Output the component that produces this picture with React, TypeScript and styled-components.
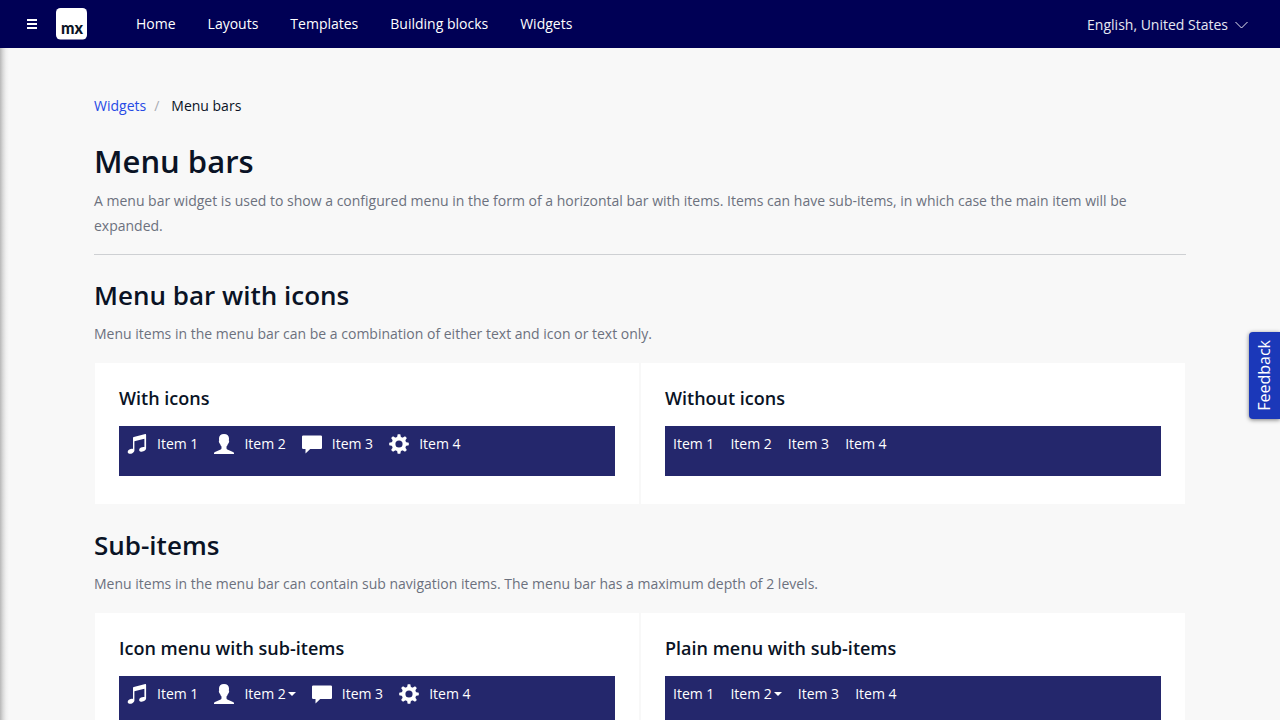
import React from "react";
import styled, { createGlobalStyle } from "styled-components";

const GlobalStyle = createGlobalStyle`
  *, *::before, *::after { box-sizing: border-box; }
  body {
    margin: 0;
    background: #f8f8f8;
    color: #0a1325;
    font-family: "Open Sans", sans-serif;
    font-size: 14px;
    line-height: 20px;
  }
  h1, h2, h3, p, ul, ol { margin: 0; padding: 0; }
  ul, ol { list-style: none; }
  a { text-decoration: none; }
  button { font: inherit; border: 0; cursor: pointer; }
`;

const Page = styled.div`
  position: relative;
  display: flex;
  flex-direction: column;
  height: 100vh;
  overflow: hidden;
`;

const TopBar = styled.header`
  display: flex;
  flex: none;
  align-items: center;
  height: 48px;
  padding: 0 32px 0 24px;
  background: #000055;
  color: #ffffff;
`;

const Toggle = styled.button`
  display: flex;
  align-items: center;
  justify-content: center;
  width: 16px;
  height: 32px;
  padding: 0;
  background: transparent;
  color: #ffffff;
`;

const Brand = styled.a`
  display: flex;
  margin: 0 32px 0 16px;
`;

const MainNav = styled.nav`
  display: flex;
  flex: 1;
`;

const NavLink = styled.a`
  padding: 14px 16px;
  color: #ffffff;
`;

const Language = styled.button`
  display: flex;
  align-items: center;
  gap: 7px;
  padding: 2px 0 0;
  background: transparent;
  color: #e6e7f2;
`;

const Body = styled.div`
  flex: 1;
  min-height: 0;
  overflow: hidden;
  background: linear-gradient(to right, #b8b8b8 0, #dadada 3px, #f0f0f0 6px, #f8f8f8 9px);
`;

const Content = styled.main`
  padding: 48px 94px;
`;

const Crumbs = styled.ol`
  display: flex;
  margin-bottom: 24px;
`;

const Crumb = styled.li`
  & + &::before {
    content: "/";
    padding: 0 12px 0 8px;
    color: #a9acb3;
  }
`;

const CrumbLink = styled.a`
  color: #264ae5;
`;

const PageTitle = styled.h1`
  margin-bottom: 6px;
  font-size: 31px;
  font-weight: 600;
  line-height: 42px;
`;

const Intro = styled.p`
  margin-bottom: 16px;
  color: #6c717e;
  line-height: 25px;
`;

const Rule = styled.hr`
  height: 1px;
  margin: 0;
  border: 0;
  background: #ced0d3;
`;

const Section = styled.section`
  margin-top: 24px;
`;

const SectionTitle = styled.h2`
  margin-bottom: 10px;
  font-size: 26px;
  font-weight: 600;
  line-height: 32px;
`;

const Cards = styled.div`
  display: grid;
  grid-template-columns: 1fr 1fr;
`;

const Card = styled.article`
  padding: 24px 24px 28px;
  border: 1px solid #f8f8f8;
  background: #ffffff;
`;

const CardTitle = styled.h3`
  margin-bottom: 16px;
  font-size: 18px;
  font-weight: 600;
  line-height: 23px;
`;

const MenuBar = styled.ul`
  display: flex;
  align-items: flex-start;
  height: 50px;
  background: #24276c;
`;

const MenuLink = styled.a`
  display: flex;
  align-items: center;
  padding: 8px;
  color: #ffffff;
`;

const Glyph = styled.svg`
  margin-right: 10px;
  fill: currentColor;
`;

const Caret = styled.span`
  margin-left: 2px;
  border-top: 4px solid #ffffff;
  border-right: 4px solid transparent;
  border-left: 4px solid transparent;
`;

const Feedback = styled.button`
  position: absolute;
  top: 332px;
  right: 0;
  width: 31px;
  height: 87px;
  padding: 0;
  border-radius: 4px 0 0 4px;
  background: #1b38b9;
  box-shadow: 0 1px 4px rgba(0, 0, 0, 0.5);
  color: #ffffff;
  font-size: 16px;
  line-height: 31px;
  writing-mode: sideways-lr;
`;

type IconName = "music" | "user" | "comment" | "cog";

const teeth = [0, 45, 90, 135, 180, 225, 270, 315];

const shapes: Record<IconName, React.ReactNode> = {
  music: (
    <path d="M18.300.1 6.800 3Q6 3.200 6 4v11c-1-.4-2.400-.2-3.600.5C1 16.300.4 17.600.9 18.700c.6 1.200 2.400 1.500 4.100.7 1.500-.7 2.400-1.700 2.400-2.800V7.300l10-2.500v8.300c-1-.4-2.300-.2-3.400.4-1.500.8-2.200 2.100-1.600 3.200.6 1.100 2.400 1.400 4 .6 1.700-.8 2.700-1.800 2.700-3.100V.9q0-1-.8-.8Z" />
  ),
  user: (
    <path d="M10 0C6.700 0 5 2 5 4.600c0 1 .1 1.400.2 2-.5.300-.5 1 0 2.100.3.700.6 1 .9 1.200.3 1 .8 1.900 1.400 2.600v1.800c0 .5-.3.900-.8 1.100L1 18Q0 18.500 0 19.300V20h20v-.7q0-.8-1-1.300l-5.700-2.600c-.5-.2-.8-.6-.8-1.100v-1.800c.6-.7 1.100-1.600 1.400-2.600.3-.2.600-.5.900-1.200.5-1.100.5-1.800 0-2.100.1-.6.2-1 .2-2C15 2 13.300 0 10 0Z" />
  ),
  comment: (
    <path d="M1.200 1.400h17.600q1.200 0 1.200 1.200v11.200q0 1.200-1.200 1.200H8.200l-4.700 4.600V15H1.200Q0 15 0 13.800V2.600Q0 1.400 1.200 1.400Z" />
  ),
  cog: (
    <>
      <path
        fillRule="evenodd"
        d="M10 2.700a7.300 7.300 0 1 1 0 14.600 7.300 7.300 0 0 1 0-14.600Zm0 3.700a3.600 3.600 0 1 0 0 7.200 3.600 3.600 0 0 0 0-7.200Z"
      />
      {teeth.map((angle) => (
        <path key={angle} d="M8 3.600 8.700.2h2.600l.7 3.400Z" transform={`rotate(${angle} 10 10)`} />
      ))}
    </>
  ),
};

type Item = { label: string; icon: IconName; sub?: boolean };

const plainItems: Item[] = [
  { label: "Item 1", icon: "music" },
  { label: "Item 2", icon: "user" },
  { label: "Item 3", icon: "comment" },
  { label: "Item 4", icon: "cog" },
];

const nestedItems = plainItems.map((item) => ({ ...item, sub: item.label === "Item 2" }));

function MenuCard({ title, items, icons }: { title: string; items: Item[]; icons?: boolean }) {
  return (
    <Card>
      <CardTitle>{title}</CardTitle>
      <MenuBar>
        {items.map((item) => (
          <li key={item.label}>
            <MenuLink href="#" aria-haspopup={item.sub || undefined}>
              {icons && (
                <Glyph width="20" height="20" viewBox="0 0 20 20" aria-hidden="true">
                  {shapes[item.icon]}
                </Glyph>
              )}
              {item.label}
              {item.sub && <Caret />}
            </MenuLink>
          </li>
        ))}
      </MenuBar>
    </Card>
  );
}

export default function App() {
  return (
    <Page>
      <GlobalStyle />
      <TopBar>
        <Toggle aria-label="Toggle sidebar">
          <svg width="12" height="12" viewBox="0 0 12 12" fill="currentColor">
            <path d="M1 1h10v2H1zM1 5h10v2H1zM1 9h10v2H1z" />
          </svg>
        </Toggle>
        <Brand href="#" aria-label="Mendix home">
          <svg width="32" height="32" viewBox="0 0 32 32">
            <rect width="31" height="31.500" rx="4.500" fill="#ffffff" />
            <text
              x="5"
              y="26"
              fill="#0a1325"
              fontFamily="Lato, sans-serif"
              fontSize="16"
              fontWeight="900"
            >
              mx
            </text>
          </svg>
        </Brand>
        <MainNav aria-label="Main">
          {["Home", "Layouts", "Templates", "Building blocks", "Widgets"].map((label) => (
            <NavLink key={label} href="#">
              {label}
            </NavLink>
          ))}
        </MainNav>
        <Language aria-haspopup="listbox">
          English, United States
          <svg width="13" height="8" viewBox="0 0 13 8" fill="none" stroke="currentColor">
            <path d="m.5 1 6 6 6-6" />
          </svg>
        </Language>
      </TopBar>
      <Body>
        <Content>
          <nav aria-label="Breadcrumb">
            <Crumbs>
              <Crumb>
                <CrumbLink href="#">Widgets</CrumbLink>
              </Crumb>
              <Crumb aria-current="page">Menu bars</Crumb>
            </Crumbs>
          </nav>
          <PageTitle>Menu bars</PageTitle>
          <Intro>
            A menu bar widget is used to show a configured menu in the form of a horizontal bar with items. Items can
            have sub-items, in which case the main item will be expanded.
          </Intro>
          <Rule />
          <Section>
            <SectionTitle>Menu bar with icons</SectionTitle>
            <Intro>Menu items in the menu bar can be a combination of either text and icon or text only.</Intro>
            <Cards>
              <MenuCard title="With icons" items={plainItems} icons />
              <MenuCard title="Without icons" items={plainItems} />
            </Cards>
          </Section>
          <Section>
            <SectionTitle>Sub-items</SectionTitle>
            <Intro>
              Menu items in the menu bar can contain sub navigation items. The menu bar has a maximum depth of 2 levels.
            </Intro>
            <Cards>
              <MenuCard title="Icon menu with sub-items" items={nestedItems} icons />
              <MenuCard title="Plain menu with sub-items" items={nestedItems} />
            </Cards>
          </Section>
        </Content>
      </Body>
      <Feedback>Feedback</Feedback>
    </Page>
  );
}
